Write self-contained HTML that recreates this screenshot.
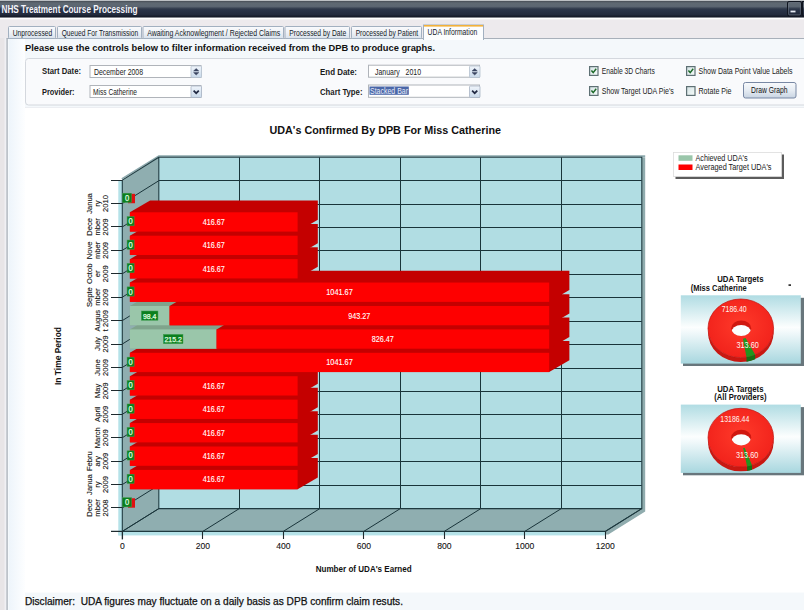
<!DOCTYPE html>
<html><head><meta charset="utf-8"><style>
html,body{margin:0;padding:0;background:#FAFCFE;}
svg{display:block;font-family:"Liberation Sans",sans-serif;}
</style></head><body>
<svg width="804" height="610" viewBox="0 0 804 610">
<defs>
<linearGradient id="gTitle" gradientUnits="userSpaceOnUse" x1="0" y1="0" x2="0" y2="17.8">
 <stop offset="0" stop-color="#BCC0C4"/><stop offset="0.055" stop-color="#BCC0C4"/>
 <stop offset="0.065" stop-color="#464C54"/><stop offset="0.11" stop-color="#565E68"/><stop offset="0.2" stop-color="#5E6872"/><stop offset="0.36" stop-color="#5C6672"/>
 <stop offset="0.5" stop-color="#2E384A"/><stop offset="0.6" stop-color="#283246"/><stop offset="0.84" stop-color="#222A3C"/>
 <stop offset="0.9" stop-color="#161C2A"/><stop offset="1" stop-color="#141A28"/>
</linearGradient>
<linearGradient id="gTab" x1="0" y1="0" x2="0" y2="1">
 <stop offset="0" stop-color="#FAFBFD"/><stop offset="0.5" stop-color="#EEF1F6"/><stop offset="1" stop-color="#D9E2EC"/>
</linearGradient>
<linearGradient id="gBtn" x1="0" y1="0" x2="0" y2="1">
 <stop offset="0" stop-color="#F8FAFC"/><stop offset="0.5" stop-color="#E6ECF3"/><stop offset="1" stop-color="#C8D4E2"/>
</linearGradient>
<linearGradient id="gSpin" x1="0" y1="0" x2="0" y2="1">
 <stop offset="0" stop-color="#F0F5FB"/><stop offset="1" stop-color="#C9D9EA"/>
</linearGradient>
<linearGradient id="gPieBg" x1="0" y1="0" x2="0" y2="1">
 <stop offset="0" stop-color="#B0DCE3"/><stop offset="0.47" stop-color="#FCFEFE"/><stop offset="0.55" stop-color="#F0F8FA"/><stop offset="1" stop-color="#A8D7DF"/>
</linearGradient>
<radialGradient id="gPie" cx="0.5" cy="0.45" r="0.6">
 <stop offset="0" stop-color="#FF3A2A"/><stop offset="1" stop-color="#F0201A"/>
</radialGradient>
<linearGradient id="gLeft" x1="0" y1="0" x2="1" y2="0">
 <stop offset="0" stop-color="#FFFFFF"/><stop offset="0.08" stop-color="#EEF5FB"/><stop offset="1" stop-color="#FDFEFF"/>
</linearGradient>
<linearGradient id="gCb" x1="0" y1="0" x2="1" y2="1">
 <stop offset="0" stop-color="#D4E2E4"/><stop offset="1" stop-color="#F6FCFA"/>
</linearGradient>
</defs>
<rect x="0" y="0" width="804" height="610" fill="#F4F8FB"/>
<rect x="25" y="107.5" width="779" height="485" fill="#FFFFFF"/>
<rect x="25" y="107" width="779" height="1" fill="#ECEEF2"/>
<rect x="7.7" y="39" width="17.3" height="572" fill="url(#gLeft)"/>
<rect x="0" y="0" width="804" height="17.8" fill="url(#gTitle)"/>
<text x="1.5" y="13" font-size="10" font-weight="bold" fill="#F4F4FA" textLength="136" lengthAdjust="spacingAndGlyphs">NHS Treatment Course Processing</text>
<rect x="787.5" y="1.5" width="14" height="14.5" rx="1.5" fill="none" stroke="#101520" stroke-width="1"/>
<rect x="788.6" y="2.6" width="11.8" height="12.3" rx="1" fill="none" stroke="#6C7682" stroke-width="0.8" opacity="0.8"/>
<rect x="790.5" y="10.6" width="5" height="1.8" fill="#E8ECF4"/>
<rect x="802.5" y="1.5" width="3" height="14.5" fill="none" stroke="#101520" stroke-width="1"/>
<rect x="0" y="17.8" width="804" height="21" fill="#EDEAED"/>
<rect x="0" y="17.8" width="804" height="1.5" fill="#FFFFFF"/>
<rect x="0" y="38" width="6.5" height="572" fill="#E8E5E7"/>
<rect x="4.5" y="38" width="1.6" height="572" fill="#F0F0F4"/>
<rect x="6.5" y="38.5" width="1.2" height="572" fill="#A4ACB6"/>
<rect x="6.5" y="38" width="798" height="1" fill="#A8B0BA"/>
<rect x="8.5" y="26.5" width="47.0" height="12" fill="url(#gTab)" stroke="#A2B0C0" stroke-width="1" rx="1"/>
<text x="12.7" y="36.3" font-size="8.8" font-weight="normal" fill="#141C28" textLength="39.5" lengthAdjust="spacingAndGlyphs">Unprocessed</text>
<rect x="57.5" y="26.5" width="84.0" height="12" fill="url(#gTab)" stroke="#A2B0C0" stroke-width="1" rx="1"/>
<text x="61.7" y="36.3" font-size="8.8" font-weight="normal" fill="#141C28" textLength="76.5" lengthAdjust="spacingAndGlyphs">Queued For Transmission</text>
<rect x="143" y="26.5" width="140.5" height="12" fill="url(#gTab)" stroke="#A2B0C0" stroke-width="1" rx="1"/>
<text x="147.2" y="36.3" font-size="8.8" font-weight="normal" fill="#141C28" textLength="133.0" lengthAdjust="spacingAndGlyphs">Awaiting Acknowlegment / Rejected Claims</text>
<rect x="285" y="26.5" width="64.5" height="12" fill="url(#gTab)" stroke="#A2B0C0" stroke-width="1" rx="1"/>
<text x="289.2" y="36.3" font-size="8.8" font-weight="normal" fill="#141C28" textLength="57.0" lengthAdjust="spacingAndGlyphs">Processed by Date</text>
<rect x="351.5" y="26.5" width="70.0" height="12" fill="url(#gTab)" stroke="#A2B0C0" stroke-width="1" rx="1"/>
<text x="355.7" y="36.3" font-size="8.8" font-weight="normal" fill="#141C28" textLength="62.5" lengthAdjust="spacingAndGlyphs">Processed by Patient</text>
<rect x="423.5" y="25" width="60" height="14.5" fill="#FCFDFE" stroke="#A2B0C0" stroke-width="1"/>
<rect x="424" y="25" width="59" height="1.6" fill="#F2B13A"/>
<rect x="424" y="38" width="59" height="2" fill="#FCFDFE"/>
<text x="427.6" y="35.2" font-size="8.8" font-weight="normal" fill="#141C28" textLength="49.7" lengthAdjust="spacingAndGlyphs">UDA Information</text>
<text x="25" y="51" font-size="9.5" font-weight="bold" fill="#111" textLength="410" lengthAdjust="spacingAndGlyphs">Please use the controls below to filter information received from the DPB to produce graphs.</text>
<rect x="25.5" y="58.5" width="790" height="46.5" rx="3" fill="#F9FAFC" stroke="#D4D8DE" stroke-width="1"/>
<text x="42" y="74.3" font-size="9" font-weight="bold" fill="#1A1A1A" textLength="39" lengthAdjust="spacingAndGlyphs">Start Date:</text>
<text x="42" y="94.5" font-size="9" font-weight="bold" fill="#1A1A1A" textLength="32.5" lengthAdjust="spacingAndGlyphs">Provider:</text>
<text x="320" y="74.5" font-size="9" font-weight="bold" fill="#1A1A1A" textLength="37" lengthAdjust="spacingAndGlyphs">End Date:</text>
<text x="320" y="94.5" font-size="9" font-weight="bold" fill="#1A1A1A" textLength="42.5" lengthAdjust="spacingAndGlyphs">Chart Type:</text>
<rect x="90.0" y="65.5" width="111.0" height="12" fill="#FFFFFF" stroke="#B0B4BA" stroke-width="1"/>
<rect x="191" y="66" width="10.5" height="11.5" rx="1" fill="url(#gSpin)" stroke="#B4C0CE" stroke-width="0.8"/>
<path d="M193.6 71 L196.2 68.6 L198.8 71 Z" fill="#3A4460" stroke="#3A4460" stroke-width="0.5"/>
<path d="M193.6 72.6 L196.2 75 L198.8 72.6 Z" fill="#3A4460" stroke="#3A4460" stroke-width="0.5"/>
<text x="94" y="74.9" font-size="8.8" font-weight="normal" fill="#1A1A1A" textLength="49" lengthAdjust="spacingAndGlyphs">December 2008</text>
<rect x="90.0" y="85.5" width="111.0" height="12" fill="#FFFFFF" stroke="#B0B4BA" stroke-width="1"/>
<rect x="191" y="86" width="10.5" height="11.5" rx="1" fill="url(#gSpin)" stroke="#A8B4C4" stroke-width="0.8"/>
<path d="M193.6 90.6 L196.2 93.2 L198.8 90.6" fill="none" stroke="#222A44" stroke-width="1.7"/>
<text x="93" y="94.9" font-size="8.8" font-weight="normal" fill="#1A1A1A" textLength="44" lengthAdjust="spacingAndGlyphs">Miss Catherine</text>
<rect x="368.5" y="65.2" width="111" height="12.0" fill="#FFFFFF" stroke="#B0B4BA" stroke-width="1"/>
<rect x="469.5" y="66" width="10.5" height="11.5" rx="1" fill="url(#gSpin)" stroke="#B4C0CE" stroke-width="0.8"/>
<path d="M472.1 71 L474.7 68.6 L477.3 71 Z" fill="#3A4460" stroke="#3A4460" stroke-width="0.5"/>
<path d="M472.1 72.6 L474.7 75 L477.3 72.6 Z" fill="#3A4460" stroke="#3A4460" stroke-width="0.5"/>
<text x="375" y="74.9" font-size="8.8" font-weight="normal" fill="#1A1A1A" textLength="46" lengthAdjust="spacingAndGlyphs">January   2010</text>
<rect x="368.5" y="85.0" width="111" height="12.299999999999997" fill="#FFFFFF" stroke="#B0B4BA" stroke-width="1"/>
<rect x="469.5" y="86" width="10.5" height="11.5" rx="1" fill="url(#gSpin)" stroke="#A8B4C4" stroke-width="0.8"/>
<path d="M472.1 90.6 L474.7 93.2 L477.3 90.6" fill="none" stroke="#222A44" stroke-width="1.7"/>
<rect x="369.5" y="86.5" width="39.3" height="8.3" fill="#4A67A8"/>
<text x="370" y="94.0" font-size="8.8" font-weight="normal" fill="#E8ECF8" textLength="38" lengthAdjust="spacingAndGlyphs">Stacked Bar</text>
<rect x="589.6" y="66.6" width="8.4" height="8.8" fill="url(#gCb)" stroke="#5E7074" stroke-width="1.2"/>
<path d="M591.4 70.6 L593.2 72.6 L596.2 68.8" fill="none" stroke="#1E6A2A" stroke-width="1.5"/>
<text x="601.8" y="73.9" font-size="8.7" font-weight="normal" fill="#1A1A1A" textLength="53" lengthAdjust="spacingAndGlyphs">Enable 3D Charts</text>
<rect x="589.6" y="86.6" width="8.4" height="8.8" fill="url(#gCb)" stroke="#5E7074" stroke-width="1.2"/>
<path d="M591.4 90.6 L593.2 92.6 L596.2 88.8" fill="none" stroke="#1E6A2A" stroke-width="1.5"/>
<text x="601.8" y="93.8" font-size="8.7" font-weight="normal" fill="#1A1A1A" textLength="72" lengthAdjust="spacingAndGlyphs">Show Target UDA Pie&#39;s</text>
<rect x="686.6" y="66.6" width="8.4" height="8.8" fill="url(#gCb)" stroke="#5E7074" stroke-width="1.2"/>
<path d="M688.4 70.6 L690.2 72.6 L693.2 68.8" fill="none" stroke="#1E6A2A" stroke-width="1.5"/>
<text x="698.5" y="73.9" font-size="8.7" font-weight="normal" fill="#1A1A1A" textLength="94" lengthAdjust="spacingAndGlyphs">Show Data Point Value Labels</text>
<rect x="686.6" y="86.6" width="8.4" height="8.8" fill="url(#gCb)" stroke="#5E7074" stroke-width="1.2"/>
<text x="698.5" y="93.8" font-size="8.7" font-weight="normal" fill="#1A1A1A" textLength="33" lengthAdjust="spacingAndGlyphs">Rotate Pie</text>
<rect x="743.5" y="82.5" width="52.5" height="15.5" rx="2" fill="url(#gBtn)" stroke="#7888A4" stroke-width="1"/>
<text x="751" y="93.3" font-size="9" font-weight="normal" fill="#101010" textLength="36.5" lengthAdjust="spacingAndGlyphs">Draw Graph</text>
<text x="25" y="605" font-size="10" font-weight="normal" fill="#111" textLength="378" lengthAdjust="spacingAndGlyphs" stroke="#111" stroke-width="0.25">Disclaimer:  UDA figures may fluctuate on a daily basis as DPB confirm claim resuts.</text>
<text x="269.5" y="134.3" font-size="11.5" font-weight="bold" fill="#111" textLength="231.5" lengthAdjust="spacingAndGlyphs">UDA&#39;s Confirmed By DPB For Miss Catherine</text>
<rect x="118.3" y="180.09999999999997" width="4.2" height="355.3" fill="#B5E2E8"/>
<rect x="118.3" y="531.4" width="487.00000000000006" height="4" fill="#B5E2E8"/>
<polygon points="605.3000000000001,531.4 641.8000000000001,508.59999999999997 641.8000000000001,157.29999999999995 645.2,157.29999999999995 645.2,511.59999999999997 608.3000000000001,534.6 605.3000000000001,534.6" fill="#90ACAE"/>
<polygon points="122.3,180.09999999999997 158.8,157.29999999999995 158.8,508.59999999999997 122.3,531.4" fill="#8FAEB0"/>
<polygon points="122.3,531.4 605.3000000000001,531.4 641.8000000000001,508.59999999999997 158.8,508.59999999999997" fill="#8FAEB0"/>
<rect x="158.8" y="157.29999999999995" width="483.00000000000006" height="351.3" fill="#B1DDE3"/>
<path d="M158.8 485.50H641.80 M158.8 461.50H641.80 M158.8 438.50H641.80 M158.8 414.50H641.80 M158.8 391.50H641.80 M158.8 368.50H641.80 M158.8 344.50H641.80 M158.8 321.50H641.80 M158.8 297.50H641.80 M158.8 274.50H641.80 M158.8 250.50H641.80 M158.8 227.50H641.80 M158.8 204.50H641.80 M158.8 180.50H641.80 M239.50 157.29999999999995V508.59999999999997 M319.50 157.29999999999995V508.59999999999997 M400.50 157.29999999999995V508.59999999999997 M480.50 157.29999999999995V508.59999999999997 M561.50 157.29999999999995V508.59999999999997 M122.3 531.40L158.8 508.60 M122.3 507.98L158.8 485.18 M122.3 484.56L158.8 461.76 M122.3 461.14L158.8 438.34 M122.3 437.72L158.8 414.92 M122.3 414.30L158.8 391.50 M122.3 390.88L158.8 368.08 M122.3 367.46L158.8 344.66 M122.3 344.04L158.8 321.24 M122.3 320.62L158.8 297.82 M122.3 297.20L158.8 274.40 M122.3 273.78L158.8 250.98 M122.3 250.36L158.8 227.56 M122.3 226.94L158.8 204.14 M122.3 203.52L158.8 180.72 M122.30 531.4L158.80 508.59999999999997 M202.80 531.4L239.30 508.59999999999997 M283.30 531.4L319.80 508.59999999999997 M363.80 531.4L400.30 508.59999999999997 M444.30 531.4L480.80 508.59999999999997 M524.80 531.4L561.30 508.59999999999997 M605.30 531.4L641.80 508.59999999999997" stroke="#19343A" stroke-width="1" fill="none"/>
<path d="M121.8 178.89999999999998L158.8 156.09999999999997H645.20" stroke="#8DA9AD" stroke-width="1.6" fill="none"/>
<path d="M158.8 157.29999999999995H641.80V508.59999999999997H158.8Z M122.3 180.09999999999997L158.8 157.29999999999995 M122.3 180.09999999999997V539.4 M111 531.4H605.30 L641.80 508.59999999999997" stroke="#1E3A40" stroke-width="1.1" fill="none"/>
<path d="M111 531.50H122.3 M111 507.50H122.3 M111 484.50H122.3 M111 461.50H122.3 M111 437.50H122.3 M111 414.50H122.3 M111 390.50H122.3 M111 367.50H122.3 M111 344.50H122.3 M111 320.50H122.3 M111 297.50H122.3 M111 273.50H122.3 M111 250.50H122.3 M111 226.50H122.3 M111 203.50H122.3 M111 180.50H122.3 M122.50 531.4V538.9 M202.50 531.4V538.9 M283.50 531.4V538.9 M363.50 531.4V538.9 M444.50 531.4V538.9 M524.50 531.4V538.9 M605.50 531.4V538.9" stroke="#1E2A2E" stroke-width="1.1" fill="none"/>
<text x="122.3" y="548.7" font-size="8.6" font-weight="normal" fill="#141414" text-anchor="middle" stroke="#141414" stroke-width="0.1">0</text>
<text x="202.8" y="548.7" font-size="8.6" font-weight="normal" fill="#141414" text-anchor="middle" stroke="#141414" stroke-width="0.1">200</text>
<text x="283.3" y="548.7" font-size="8.6" font-weight="normal" fill="#141414" text-anchor="middle" stroke="#141414" stroke-width="0.1">400</text>
<text x="363.8" y="548.7" font-size="8.6" font-weight="normal" fill="#141414" text-anchor="middle" stroke="#141414" stroke-width="0.1">600</text>
<text x="444.3" y="548.7" font-size="8.6" font-weight="normal" fill="#141414" text-anchor="middle" stroke="#141414" stroke-width="0.1">800</text>
<text x="524.8" y="548.7" font-size="8.6" font-weight="normal" fill="#141414" text-anchor="middle" stroke="#141414" stroke-width="0.1">1000</text>
<text x="605.3" y="548.7" font-size="8.6" font-weight="normal" fill="#141414" text-anchor="middle" stroke="#141414" stroke-width="0.1">1200</text>
<text x="315.7" y="572.3" font-size="8.3" font-weight="bold" fill="#111" textLength="96" lengthAdjust="spacingAndGlyphs">Number of UDA&#39;s Earned</text>
<g transform="translate(60.5,385) rotate(-90)">
<text x="0" y="0" font-size="8.4" font-weight="bold" fill="#111" textLength="58" lengthAdjust="spacingAndGlyphs">In Time Period</text>
</g>
<g transform="translate(92.30,507.98) rotate(-90)">
<text x="0" y="0" font-size="7.6" font-weight="normal" fill="#141414" text-anchor="middle" stroke="#141414" stroke-width="0.12">Dece</text>
</g>
<g transform="translate(99.90,507.98) rotate(-90)">
<text x="0" y="0" font-size="7.6" font-weight="normal" fill="#141414" text-anchor="middle" stroke="#141414" stroke-width="0.12">mber</text>
</g>
<g transform="translate(107.50,507.98) rotate(-90)">
<text x="0" y="0" font-size="7.6" font-weight="normal" fill="#141414" text-anchor="middle" stroke="#141414" stroke-width="0.12">2008</text>
</g>
<g transform="translate(92.30,484.56) rotate(-90)">
<text x="0" y="0" font-size="7.6" font-weight="normal" fill="#141414" text-anchor="middle" stroke="#141414" stroke-width="0.12">Janua</text>
</g>
<g transform="translate(99.90,484.56) rotate(-90)">
<text x="0" y="0" font-size="7.6" font-weight="normal" fill="#141414" text-anchor="middle" stroke="#141414" stroke-width="0.12">ry</text>
</g>
<g transform="translate(107.50,484.56) rotate(-90)">
<text x="0" y="0" font-size="7.6" font-weight="normal" fill="#141414" text-anchor="middle" stroke="#141414" stroke-width="0.12">2009</text>
</g>
<g transform="translate(92.30,461.14) rotate(-90)">
<text x="0" y="0" font-size="7.6" font-weight="normal" fill="#141414" text-anchor="middle" stroke="#141414" stroke-width="0.12">Febru</text>
</g>
<g transform="translate(99.90,461.14) rotate(-90)">
<text x="0" y="0" font-size="7.6" font-weight="normal" fill="#141414" text-anchor="middle" stroke="#141414" stroke-width="0.12">ary</text>
</g>
<g transform="translate(107.50,461.14) rotate(-90)">
<text x="0" y="0" font-size="7.6" font-weight="normal" fill="#141414" text-anchor="middle" stroke="#141414" stroke-width="0.12">2009</text>
</g>
<g transform="translate(99.90,437.72) rotate(-90)">
<text x="0" y="0" font-size="7.6" font-weight="normal" fill="#141414" text-anchor="middle" stroke="#141414" stroke-width="0.12">March</text>
</g>
<g transform="translate(107.50,437.72) rotate(-90)">
<text x="0" y="0" font-size="7.6" font-weight="normal" fill="#141414" text-anchor="middle" stroke="#141414" stroke-width="0.12">2009</text>
</g>
<g transform="translate(99.90,414.30) rotate(-90)">
<text x="0" y="0" font-size="7.6" font-weight="normal" fill="#141414" text-anchor="middle" stroke="#141414" stroke-width="0.12">April</text>
</g>
<g transform="translate(107.50,414.30) rotate(-90)">
<text x="0" y="0" font-size="7.6" font-weight="normal" fill="#141414" text-anchor="middle" stroke="#141414" stroke-width="0.12">2009</text>
</g>
<g transform="translate(99.90,390.88) rotate(-90)">
<text x="0" y="0" font-size="7.6" font-weight="normal" fill="#141414" text-anchor="middle" stroke="#141414" stroke-width="0.12">May</text>
</g>
<g transform="translate(107.50,390.88) rotate(-90)">
<text x="0" y="0" font-size="7.6" font-weight="normal" fill="#141414" text-anchor="middle" stroke="#141414" stroke-width="0.12">2009</text>
</g>
<g transform="translate(99.90,367.46) rotate(-90)">
<text x="0" y="0" font-size="7.6" font-weight="normal" fill="#141414" text-anchor="middle" stroke="#141414" stroke-width="0.12">June</text>
</g>
<g transform="translate(107.50,367.46) rotate(-90)">
<text x="0" y="0" font-size="7.6" font-weight="normal" fill="#141414" text-anchor="middle" stroke="#141414" stroke-width="0.12">2009</text>
</g>
<g transform="translate(99.90,344.04) rotate(-90)">
<text x="0" y="0" font-size="7.6" font-weight="normal" fill="#141414" text-anchor="middle" stroke="#141414" stroke-width="0.12">July</text>
</g>
<g transform="translate(107.50,344.04) rotate(-90)">
<text x="0" y="0" font-size="7.6" font-weight="normal" fill="#141414" text-anchor="middle" stroke="#141414" stroke-width="0.12">2009</text>
</g>
<g transform="translate(99.90,320.62) rotate(-90)">
<text x="0" y="0" font-size="7.6" font-weight="normal" fill="#141414" text-anchor="middle" stroke="#141414" stroke-width="0.12">Augus</text>
</g>
<g transform="translate(107.50,320.62) rotate(-90)">
<text x="0" y="0" font-size="7.6" font-weight="normal" fill="#141414" text-anchor="middle" stroke="#141414" stroke-width="0.12">t 2009</text>
</g>
<g transform="translate(92.30,297.20) rotate(-90)">
<text x="0" y="0" font-size="7.6" font-weight="normal" fill="#141414" text-anchor="middle" stroke="#141414" stroke-width="0.12">Septe</text>
</g>
<g transform="translate(99.90,297.20) rotate(-90)">
<text x="0" y="0" font-size="7.6" font-weight="normal" fill="#141414" text-anchor="middle" stroke="#141414" stroke-width="0.12">mber</text>
</g>
<g transform="translate(107.50,297.20) rotate(-90)">
<text x="0" y="0" font-size="7.6" font-weight="normal" fill="#141414" text-anchor="middle" stroke="#141414" stroke-width="0.12">2009</text>
</g>
<g transform="translate(92.30,273.78) rotate(-90)">
<text x="0" y="0" font-size="7.6" font-weight="normal" fill="#141414" text-anchor="middle" stroke="#141414" stroke-width="0.12">Octob</text>
</g>
<g transform="translate(99.90,273.78) rotate(-90)">
<text x="0" y="0" font-size="7.6" font-weight="normal" fill="#141414" text-anchor="middle" stroke="#141414" stroke-width="0.12">er</text>
</g>
<g transform="translate(107.50,273.78) rotate(-90)">
<text x="0" y="0" font-size="7.6" font-weight="normal" fill="#141414" text-anchor="middle" stroke="#141414" stroke-width="0.12">2009</text>
</g>
<g transform="translate(92.30,250.36) rotate(-90)">
<text x="0" y="0" font-size="7.6" font-weight="normal" fill="#141414" text-anchor="middle" stroke="#141414" stroke-width="0.12">Nove</text>
</g>
<g transform="translate(99.90,250.36) rotate(-90)">
<text x="0" y="0" font-size="7.6" font-weight="normal" fill="#141414" text-anchor="middle" stroke="#141414" stroke-width="0.12">mber</text>
</g>
<g transform="translate(107.50,250.36) rotate(-90)">
<text x="0" y="0" font-size="7.6" font-weight="normal" fill="#141414" text-anchor="middle" stroke="#141414" stroke-width="0.12">2009</text>
</g>
<g transform="translate(92.30,226.94) rotate(-90)">
<text x="0" y="0" font-size="7.6" font-weight="normal" fill="#141414" text-anchor="middle" stroke="#141414" stroke-width="0.12">Dece</text>
</g>
<g transform="translate(99.90,226.94) rotate(-90)">
<text x="0" y="0" font-size="7.6" font-weight="normal" fill="#141414" text-anchor="middle" stroke="#141414" stroke-width="0.12">mber</text>
</g>
<g transform="translate(107.50,226.94) rotate(-90)">
<text x="0" y="0" font-size="7.6" font-weight="normal" fill="#141414" text-anchor="middle" stroke="#141414" stroke-width="0.12">2009</text>
</g>
<g transform="translate(92.30,203.52) rotate(-90)">
<text x="0" y="0" font-size="7.6" font-weight="normal" fill="#141414" text-anchor="middle" stroke="#141414" stroke-width="0.12">Janua</text>
</g>
<g transform="translate(99.90,203.52) rotate(-90)">
<text x="0" y="0" font-size="7.6" font-weight="normal" fill="#141414" text-anchor="middle" stroke="#141414" stroke-width="0.12">ry</text>
</g>
<g transform="translate(107.50,203.52) rotate(-90)">
<text x="0" y="0" font-size="7.6" font-weight="normal" fill="#141414" text-anchor="middle" stroke="#141414" stroke-width="0.12">2010</text>
</g>
<polygon points="129.90,489.21 129.90,469.91 150.10,458.11 317.81,458.11 317.81,477.41 297.61,489.21" fill="#C40000"/>
<rect x="129.90" y="469.91" width="167.71" height="19.30" fill="#FE0000"/>
<polygon points="129.90,465.79 129.90,446.49 150.10,434.69 317.81,434.69 317.81,453.99 297.61,465.79" fill="#C40000"/>
<rect x="129.90" y="446.49" width="167.71" height="19.30" fill="#FE0000"/>
<polygon points="129.90,442.37 129.90,423.07 150.10,411.27 317.81,411.27 317.81,430.57 297.61,442.37" fill="#C40000"/>
<rect x="129.90" y="423.07" width="167.71" height="19.30" fill="#FE0000"/>
<polygon points="129.90,418.95 129.90,399.65 150.10,387.85 317.81,387.85 317.81,407.15 297.61,418.95" fill="#C40000"/>
<rect x="129.90" y="399.65" width="167.71" height="19.30" fill="#FE0000"/>
<polygon points="129.90,395.53 129.90,376.23 150.10,364.43 317.81,364.43 317.81,383.73 297.61,395.53" fill="#C40000"/>
<rect x="129.90" y="376.23" width="167.71" height="19.30" fill="#FE0000"/>
<polygon points="129.90,372.11 129.90,352.81 150.10,341.01 569.37,341.01 569.37,360.31 549.17,372.11" fill="#C40000"/>
<rect x="129.90" y="352.81" width="419.27" height="19.30" fill="#FE0000"/>
<polygon points="129.90,348.69 129.90,329.39 150.10,317.59 237.72,317.59 217.52,348.69" fill="#7FA48C"/>
<polygon points="216.52,348.69 216.52,329.39 236.72,317.59 569.37,317.59 569.37,336.89 549.17,348.69" fill="#C40000"/>
<rect x="129.90" y="329.39" width="86.62" height="19.30" fill="#9AC6AA"/>
<rect x="216.52" y="329.39" width="332.65" height="19.30" fill="#FE0000"/>
<polygon points="129.90,325.27 129.90,305.97 150.10,294.17 190.71,294.17 170.51,325.27" fill="#7FA48C"/>
<polygon points="169.51,325.27 169.51,305.97 189.71,294.17 569.37,294.17 569.37,313.47 549.17,325.27" fill="#C40000"/>
<rect x="129.90" y="305.97" width="39.61" height="19.30" fill="#9AC6AA"/>
<rect x="169.51" y="305.97" width="379.67" height="19.30" fill="#FE0000"/>
<polygon points="129.90,301.85 129.90,282.55 150.10,270.75 569.37,270.75 569.37,290.05 549.17,301.85" fill="#C40000"/>
<rect x="129.90" y="282.55" width="419.27" height="19.30" fill="#FE0000"/>
<polygon points="129.90,278.43 129.90,259.13 150.10,247.33 317.81,247.33 317.81,266.63 297.61,278.43" fill="#C40000"/>
<rect x="129.90" y="259.13" width="167.71" height="19.30" fill="#FE0000"/>
<polygon points="129.90,255.01 129.90,235.71 150.10,223.91 317.81,223.91 317.81,243.21 297.61,255.01" fill="#C40000"/>
<rect x="129.90" y="235.71" width="167.71" height="19.30" fill="#FE0000"/>
<polygon points="129.90,231.59 129.90,212.29 150.10,200.49 317.81,200.49 317.81,219.79 297.61,231.59" fill="#C40000"/>
<rect x="129.90" y="212.29" width="167.71" height="19.30" fill="#FE0000"/>
<rect x="128" y="498.28" width="7" height="9.4" fill="#E01010"/>
<rect x="122.50" y="497.68" width="9.00" height="9.2" fill="#0B7F1E" stroke="#3A9A4A" stroke-width="0.5"/>
<text x="127" y="505.28" font-size="8.4" font-weight="normal" fill="#E0FFE0" text-anchor="middle" textLength="4.2" lengthAdjust="spacingAndGlyphs" stroke="#E0FFE0" stroke-width="0.25">0</text>
<text x="213.75" y="482.46" font-size="8.9" font-weight="normal" fill="#FFFFFF" text-anchor="middle" textLength="22" lengthAdjust="spacingAndGlyphs" stroke="#FFFFFF" stroke-width="0.12">416.67</text>
<rect x="127.10" y="474.26" width="7.00" height="9.2" fill="#0B7F1E" stroke="#3A9A4A" stroke-width="0.5"/>
<text x="130.6" y="481.86" font-size="8.4" font-weight="normal" fill="#E0FFE0" text-anchor="middle" textLength="4.2" lengthAdjust="spacingAndGlyphs" stroke="#E0FFE0" stroke-width="0.25">0</text>
<text x="213.75" y="459.04" font-size="8.9" font-weight="normal" fill="#FFFFFF" text-anchor="middle" textLength="22" lengthAdjust="spacingAndGlyphs" stroke="#FFFFFF" stroke-width="0.12">416.67</text>
<rect x="127.10" y="450.84" width="7.00" height="9.2" fill="#0B7F1E" stroke="#3A9A4A" stroke-width="0.5"/>
<text x="130.6" y="458.44" font-size="8.4" font-weight="normal" fill="#E0FFE0" text-anchor="middle" textLength="4.2" lengthAdjust="spacingAndGlyphs" stroke="#E0FFE0" stroke-width="0.25">0</text>
<text x="213.75" y="435.62" font-size="8.9" font-weight="normal" fill="#FFFFFF" text-anchor="middle" textLength="22" lengthAdjust="spacingAndGlyphs" stroke="#FFFFFF" stroke-width="0.12">416.67</text>
<rect x="127.10" y="427.42" width="7.00" height="9.2" fill="#0B7F1E" stroke="#3A9A4A" stroke-width="0.5"/>
<text x="130.6" y="435.02" font-size="8.4" font-weight="normal" fill="#E0FFE0" text-anchor="middle" textLength="4.2" lengthAdjust="spacingAndGlyphs" stroke="#E0FFE0" stroke-width="0.25">0</text>
<text x="213.75" y="412.2" font-size="8.9" font-weight="normal" fill="#FFFFFF" text-anchor="middle" textLength="22" lengthAdjust="spacingAndGlyphs" stroke="#FFFFFF" stroke-width="0.12">416.67</text>
<rect x="127.10" y="404.00" width="7.00" height="9.2" fill="#0B7F1E" stroke="#3A9A4A" stroke-width="0.5"/>
<text x="130.6" y="411.6" font-size="8.4" font-weight="normal" fill="#E0FFE0" text-anchor="middle" textLength="4.2" lengthAdjust="spacingAndGlyphs" stroke="#E0FFE0" stroke-width="0.25">0</text>
<text x="213.75" y="388.78" font-size="8.9" font-weight="normal" fill="#FFFFFF" text-anchor="middle" textLength="22" lengthAdjust="spacingAndGlyphs" stroke="#FFFFFF" stroke-width="0.12">416.67</text>
<rect x="127.10" y="380.58" width="7.00" height="9.2" fill="#0B7F1E" stroke="#3A9A4A" stroke-width="0.5"/>
<text x="130.6" y="388.18" font-size="8.4" font-weight="normal" fill="#E0FFE0" text-anchor="middle" textLength="4.2" lengthAdjust="spacingAndGlyphs" stroke="#E0FFE0" stroke-width="0.25">0</text>
<text x="339.54" y="365.36" font-size="8.9" font-weight="normal" fill="#FFFFFF" text-anchor="middle" textLength="26.5" lengthAdjust="spacingAndGlyphs" stroke="#FFFFFF" stroke-width="0.12">1041.67</text>
<rect x="127.10" y="357.16" width="7.00" height="9.2" fill="#0B7F1E" stroke="#3A9A4A" stroke-width="0.5"/>
<text x="130.6" y="364.76" font-size="8.4" font-weight="normal" fill="#E0FFE0" text-anchor="middle" textLength="4.2" lengthAdjust="spacingAndGlyphs" stroke="#E0FFE0" stroke-width="0.25">0</text>
<text x="382.85" y="341.94" font-size="8.9" font-weight="normal" fill="#FFFFFF" text-anchor="middle" textLength="22" lengthAdjust="spacingAndGlyphs" stroke="#FFFFFF" stroke-width="0.12">826.47</text>
<rect x="163.46" y="334.44" width="19.50" height="9.2" fill="#0B7F1E" stroke="#3A9A4A" stroke-width="0.5"/>
<text x="173.21" y="342.04" font-size="8" font-weight="normal" fill="#E0FFE0" text-anchor="middle" textLength="17.5" lengthAdjust="spacingAndGlyphs" stroke="#E0FFE0" stroke-width="0.25">215.2</text>
<text x="359.34" y="318.52" font-size="8.9" font-weight="normal" fill="#FFFFFF" text-anchor="middle" textLength="22" lengthAdjust="spacingAndGlyphs" stroke="#FFFFFF" stroke-width="0.12">943.27</text>
<rect x="141.45" y="311.02" width="16.50" height="9.2" fill="#0B7F1E" stroke="#3A9A4A" stroke-width="0.5"/>
<text x="149.7" y="318.62" font-size="8" font-weight="normal" fill="#E0FFE0" text-anchor="middle" textLength="13.5" lengthAdjust="spacingAndGlyphs" stroke="#E0FFE0" stroke-width="0.25">98.4</text>
<text x="339.54" y="295.1" font-size="8.9" font-weight="normal" fill="#FFFFFF" text-anchor="middle" textLength="26.5" lengthAdjust="spacingAndGlyphs" stroke="#FFFFFF" stroke-width="0.12">1041.67</text>
<rect x="127.10" y="286.90" width="7.00" height="9.2" fill="#0B7F1E" stroke="#3A9A4A" stroke-width="0.5"/>
<text x="130.6" y="294.5" font-size="8.4" font-weight="normal" fill="#E0FFE0" text-anchor="middle" textLength="4.2" lengthAdjust="spacingAndGlyphs" stroke="#E0FFE0" stroke-width="0.25">0</text>
<text x="213.75" y="271.68" font-size="8.9" font-weight="normal" fill="#FFFFFF" text-anchor="middle" textLength="22" lengthAdjust="spacingAndGlyphs" stroke="#FFFFFF" stroke-width="0.12">416.67</text>
<rect x="127.10" y="263.48" width="7.00" height="9.2" fill="#0B7F1E" stroke="#3A9A4A" stroke-width="0.5"/>
<text x="130.6" y="271.08" font-size="8.4" font-weight="normal" fill="#E0FFE0" text-anchor="middle" textLength="4.2" lengthAdjust="spacingAndGlyphs" stroke="#E0FFE0" stroke-width="0.25">0</text>
<text x="213.75" y="248.26" font-size="8.9" font-weight="normal" fill="#FFFFFF" text-anchor="middle" textLength="22" lengthAdjust="spacingAndGlyphs" stroke="#FFFFFF" stroke-width="0.12">416.67</text>
<rect x="127.10" y="240.06" width="7.00" height="9.2" fill="#0B7F1E" stroke="#3A9A4A" stroke-width="0.5"/>
<text x="130.6" y="247.66" font-size="8.4" font-weight="normal" fill="#E0FFE0" text-anchor="middle" textLength="4.2" lengthAdjust="spacingAndGlyphs" stroke="#E0FFE0" stroke-width="0.25">0</text>
<text x="213.75" y="224.84" font-size="8.9" font-weight="normal" fill="#FFFFFF" text-anchor="middle" textLength="22" lengthAdjust="spacingAndGlyphs" stroke="#FFFFFF" stroke-width="0.12">416.67</text>
<rect x="127.10" y="216.64" width="7.00" height="9.2" fill="#0B7F1E" stroke="#3A9A4A" stroke-width="0.5"/>
<text x="130.6" y="224.24" font-size="8.4" font-weight="normal" fill="#E0FFE0" text-anchor="middle" textLength="4.2" lengthAdjust="spacingAndGlyphs" stroke="#E0FFE0" stroke-width="0.25">0</text>
<rect x="128" y="193.82" width="7" height="9.4" fill="#E01010"/>
<rect x="122.50" y="193.22" width="9.00" height="9.2" fill="#0B7F1E" stroke="#3A9A4A" stroke-width="0.5"/>
<text x="127" y="200.82" font-size="8.4" font-weight="normal" fill="#E0FFE0" text-anchor="middle" textLength="4.2" lengthAdjust="spacingAndGlyphs" stroke="#E0FFE0" stroke-width="0.25">0</text>
<rect x="675.5" y="154.5" width="108.5" height="24.5" fill="#5C5C5C"/>
<rect x="673.5" y="152.5" width="108" height="24" fill="#FFFFFF" stroke="#DCDCDC" stroke-width="0.8"/>
<rect x="678.5" y="155.3" width="14" height="5.5" fill="#9AC6AA"/>
<rect x="678.5" y="164.5" width="14" height="5.5" fill="#FE0000"/>
<text x="695.5" y="160.5" font-size="8.3" font-weight="normal" fill="#181818" textLength="52" lengthAdjust="spacingAndGlyphs">Achieved UDA&#39;s</text>
<text x="695.5" y="170.3" font-size="8.3" font-weight="normal" fill="#181818" textLength="76" lengthAdjust="spacingAndGlyphs">Averaged Target UDA&#39;s</text>
<rect x="788.5" y="284.3" width="2.5" height="1.6" fill="#222"/>
<text x="717.2" y="281.7" font-size="8.3" font-weight="bold" fill="#111" textLength="46.3" lengthAdjust="spacingAndGlyphs">UDA Targets</text>
<text x="690.7" y="290.5" font-size="8.3" font-weight="bold" fill="#111" textLength="56" lengthAdjust="spacingAndGlyphs">(Miss Catherine</text>
<rect x="683" y="297.8" width="121" height="68.2" fill="#68767C"/>
<rect x="680.8" y="295.3" width="120" height="68.3" fill="url(#gPieBg)"/>
<path d="M708.0 328.3 A32.8 29.3 0 0 0 773.5999999999999 328.3 V332.8 A32.8 29.3 0 0 1 708.0 332.8 Z" fill="#C81812"/>
<ellipse cx="740.8" cy="328.3" rx="32.8" ry="29.3" fill="url(#gPie)" stroke="#C01410" stroke-width="0.7"/>
<path d="M745.58 338.01 L755.18 354.63 A32.8 29.3 0 0 1 746.50 357.15 L742.94 338.68 Z" fill="#22951E"/>
<path d="M755.18 354.63 A32.8 29.3 0 0 1 746.50 357.15 L746.50 361.65 A32.8 29.3 0 0 0 755.18 359.13 Z" fill="#167016"/>
<clipPath id="hole295"><ellipse cx="741.2" cy="328.3" rx="10" ry="7.8"/></clipPath>
<ellipse cx="741.2" cy="328.3" rx="10" ry="7.8" fill="#D01810"/>
<ellipse cx="741.2" cy="332.8" rx="10" ry="7.8" fill="#FCFEFE" clip-path="url(#hole295)"/>
<text x="721.7" y="312.3" font-size="8.5" font-weight="normal" fill="#FFF4F0" textLength="25" lengthAdjust="spacingAndGlyphs">7186.40</text>
<text x="736.5" y="347.7" font-size="8.5" font-weight="normal" fill="#FFF4F0" textLength="22.3" lengthAdjust="spacingAndGlyphs">313.60</text>
<text x="717.2" y="391.7" font-size="8.3" font-weight="bold" fill="#111" textLength="46.3" lengthAdjust="spacingAndGlyphs">UDA Targets</text>
<text x="714.3" y="400.2" font-size="8.3" font-weight="bold" fill="#111" textLength="52.2" lengthAdjust="spacingAndGlyphs">(All Providers)</text>
<rect x="683" y="407.1" width="121" height="68.2" fill="#68767C"/>
<rect x="680.8" y="404.6" width="120" height="68.3" fill="url(#gPieBg)"/>
<path d="M708.0 437.6 A32.8 29.3 0 0 0 773.5999999999999 437.6 V442.1 A32.8 29.3 0 0 1 708.0 442.1 Z" fill="#C81812"/>
<ellipse cx="740.8" cy="437.6" rx="32.8" ry="29.3" fill="url(#gPie)" stroke="#C01410" stroke-width="0.7"/>
<path d="M744.62 447.63 L752.02 465.13 A32.8 29.3 0 0 1 747.06 466.36 L743.11 447.96 Z" fill="#22951E"/>
<path d="M752.02 465.13 A32.8 29.3 0 0 1 747.06 466.36 L747.06 470.86 A32.8 29.3 0 0 0 752.02 469.63 Z" fill="#167016"/>
<clipPath id="hole404"><ellipse cx="741.2" cy="437.6" rx="10" ry="7.8"/></clipPath>
<ellipse cx="741.2" cy="437.6" rx="10" ry="7.8" fill="#D01810"/>
<ellipse cx="741.2" cy="442.1" rx="10" ry="7.8" fill="#FCFEFE" clip-path="url(#hole404)"/>
<text x="720.3" y="421.7" font-size="8.5" font-weight="normal" fill="#FFF4F0" textLength="29" lengthAdjust="spacingAndGlyphs">13186.44</text>
<text x="736" y="457.7" font-size="8.5" font-weight="normal" fill="#FFF4F0" textLength="22.3" lengthAdjust="spacingAndGlyphs">313.60</text>
</svg></body></html>
